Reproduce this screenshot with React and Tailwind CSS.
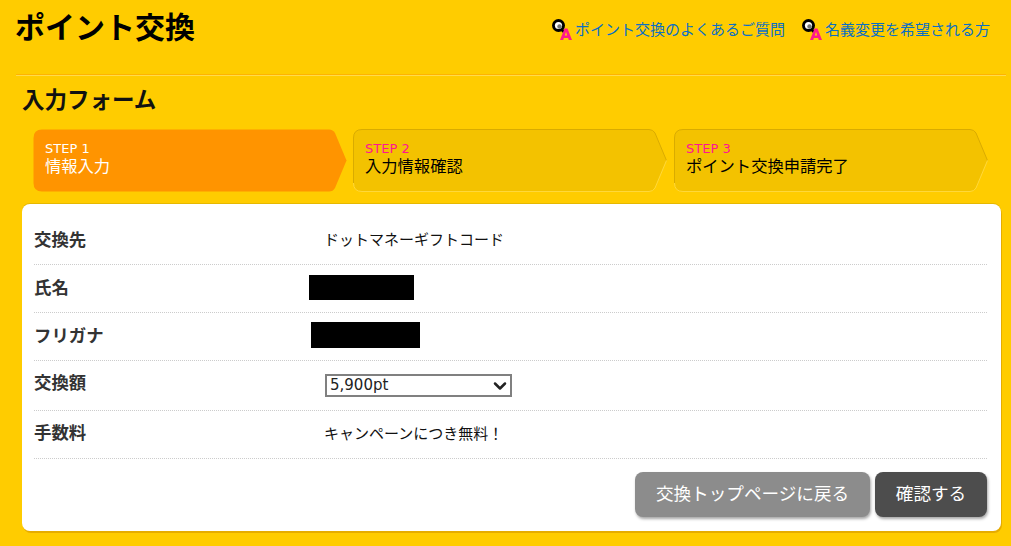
import { ChevronDown } from "lucide-react";

const font = { fontFamily: '"DejaVu Sans", "Noto Sans CJK JP", sans-serif' };

function QaIcon() {
  return (
    <svg width="20" height="22" viewBox="0 0 20 22" className="shrink-0">
      <circle cx="6.5" cy="6.5" r="6.5" fill="#000" />
      <circle cx="6.5" cy="6.5" r="3.6" fill="#fff" />
      <circle cx="7.5" cy="7.5" r="2.2" fill="#777" />
      <path d="M10 11 L14 15" stroke="#000" strokeWidth="2.5" />
      <path d="M8 21 L12.5 9.5 H15.5 L20 21 H16.8 L16.1 19 H11.9 L11.2 21 Z" fill="#ff1a8c" />
      <path d="M12.8 16.4 H15.2 L14 12.8 Z" fill="#ffcc00" />
    </svg>
  );
}

function StepShape({ active }) {
  const d = "M9 .5 H296 Q300 .5 302 4 L313.5 31.5 L302 59 Q300 62.5 296 62.5 H9 Q.5 62.5 .5 54 V9 Q.5 .5 9 .5 Z";
  if (active) {
    return (
      <svg className="absolute inset-0" width="314" height="63" viewBox="0 0 314 63">
        <path d={d} fill="#ff9400" />
      </svg>
    );
  }
  return (
    <svg className="absolute inset-0" width="314" height="63" viewBox="0 0 314 63">
      <path d={d} fill="#f3c200" />
      <path d="M.5 54 V9 Q.5 .5 9 .5 H296 Q300 .5 302 4 L313.5 31.5" fill="none" stroke="#d9ab00" />
      <path d="M313.5 31.5 L302 59 Q300 62.5 296 62.5 H9 Q.5 62.5 .5 54" fill="none" stroke="#ffd83a" />
    </svg>
  );
}

function Step({ no, label, active }) {
  return (
    <div className="relative h-[63px] w-[314px] shrink-0">
      <StepShape active={active} />
      <div className="relative pl-[12px] pt-[12px]">
        <p className={`text-[13px] leading-[16px] ${active ? "text-white" : "text-[#ff1493]"}`}>STEP {no}</p>
        <p className={`-mt-[1px] text-[16.3px] leading-[22px] ${active ? "text-white" : "text-black"}`}>{label}</p>
      </div>
    </div>
  );
}

function Row({ label, height, labelClass = "", children }) {
  return (
    <div className={`flex items-center border-b border-dotted border-[#cccccc] ${height}`}>
      <div className={`w-[290px] text-[17.4px] font-bold text-[#333333] ${labelClass}`}>{label}</div>
      <div className="flex-1 text-[15px] text-[#111111]">{children}</div>
    </div>
  );
}

export default function App() {
  return (
    <div className="h-[546px] w-[1011px] overflow-hidden bg-[#ffcc00]" style={font}>
      <div className="ml-[16px] mr-[5px] flex h-[75px] items-start justify-between border-b border-[#ffb300] pr-[16px]">
        <h1 className="-ml-[1px] mt-[7px] text-[30px] font-bold leading-[42px] text-black">ポイント交換</h1>
        <div className="mt-[19px] flex items-center gap-[17px] text-[15px] text-[#0b6fc4]">
          <a className="flex items-center gap-[3px]"><QaIcon />ポイント交換のよくあるご質問</a>
          <a className="flex items-center gap-[3px]"><QaIcon />名義変更を希望される方</a>
        </div>
      </div>
      <div className="ml-[16px] mr-[5px] h-[1px] bg-[#ffdb4d]" />

      <h2 className="ml-[22px] mt-[8px] text-[22.5px] font-bold leading-[32px] text-[#111111]">入力フォーム</h2>

      <div className="ml-[33px] mt-[13px] flex">
        <Step no="1" label="情報入力" active />
        <div className="ml-[6px]"><Step no="2" label="入力情報確認" /></div>
        <div className="ml-[7px]"><Step no="3" label="ポイント交換申請完了" /></div>
      </div>

      <div className="ml-[22px] mt-[12px] h-[327px] w-[979px] rounded-[8px] bg-white pl-[12px] pr-[14px] pt-[12px] shadow-[0_-1px_0_#e6b800,1px_2px_0_#e6ac00]">
        <Row label="交換先" height="h-[49px]"><span>ドットマネーギフトコード</span></Row>
        <Row label="氏名" height="h-[48px]"><div className="-mt-[2px] -ml-[15px] h-[25px] w-[105px] bg-black" /></Row>
        <Row label="フリガナ" height="h-[48px]"><div className="-mt-[3px] -ml-[13px] h-[26px] w-[109px] bg-black" /></Row>
        <Row label="交換額" height="h-[50px]" labelClass="-mt-[5px]">
          <div className="ml-[1px] flex h-[23px] w-[187px] items-center justify-between border-2 border-[#808080] pl-[3px] text-[15px] text-[#222222]">
            <span>5,900pt</span>
            <ChevronDown size={20} strokeWidth={3} className="text-[#222222]" />
          </div>
        </Row>
        <Row label="手数料" height="h-[48px]" labelClass="-mt-[2px]"><span className="-mt-[1px] block">キャンペーンにつき無料！</span></Row>

        <div className="mt-[13px] flex justify-end gap-[5px]">
          <button className="h-[45px] w-[235px] rounded-[8px] bg-[#8c8c8c] text-[17.6px] text-white shadow-[1px_2px_3px_rgba(0,0,0,0.35)]">交換トップページに戻る</button>
          <button className="h-[45px] w-[112px] rounded-[8px] bg-[#4d4d4d] text-[17.6px] text-white shadow-[1px_2px_3px_rgba(0,0,0,0.35)]">確認する</button>
        </div>
      </div>
    </div>
  );
}
